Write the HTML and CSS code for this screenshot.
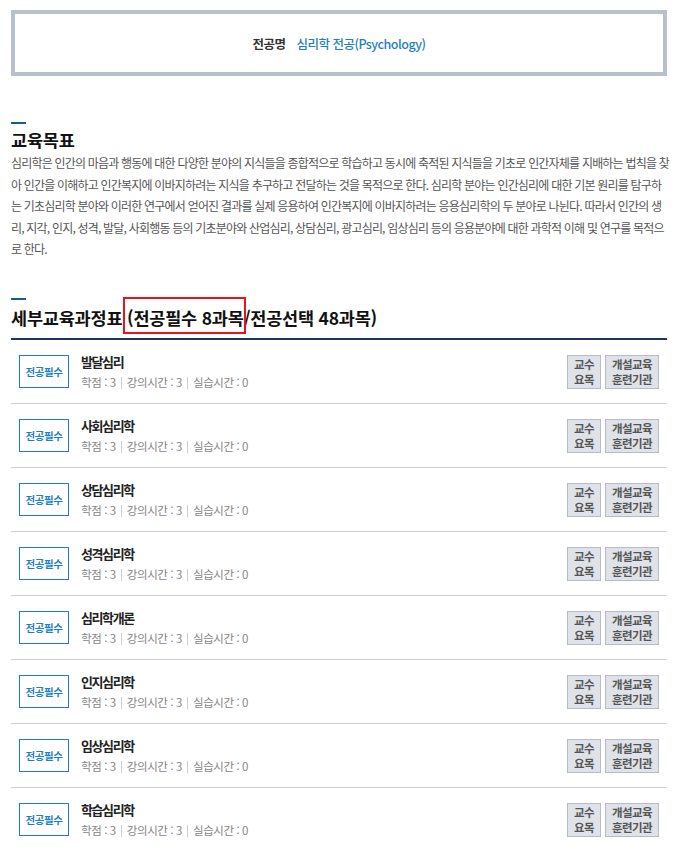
FILE: index.html
```html
<!DOCTYPE html>
<html lang="ko">
<head>
    <meta charset="utf-8">
    <title>전공 교육과정</title>
    <link rel="stylesheet" href="styles.css">
</head>
<body>
    <div class="wrap">
        <div class="major-box">
            <span class="major-label">전공명</span>
            <span class="major-name">심리학 전공(Psychology)</span>
        </div>

        <div class="section goal">
            <h2 class="sec-title">교육목표</h2>
            <p class="goal-text">심리학은 인간의 마음과 행동에 대한 다양한 분야의 지식들을 종합적으로 학습하고 동시에 축적된 지식들을 기초로 인간자체를 지배하는 법칙을 찾<br>아 인간을 이해하고 인간복지에 이바지하려는 지식을 추구하고 전달하는 것을 목적으로 한다. 심리학 분야는 인간심리에 대한 기본 원리를 탐구하<br>는 기초심리학 분야와 이러한 연구에서 얻어진 결과를 실제 응용하여 인간복지에 이바지하려는 응용심리학의 두 분야로 나뉜다. 따라서 인간의 생<br>리, 지각, 인지, 성격, 발달, 사회행동 등의 기초분야와 산업심리, 상담심리, 광고심리, 임상심리 등의 응용분야에 대한 과학적 이해 및 연구를 목적으<br>로 한다.</p>
        </div>

        <div class="section course">
            <h2 class="sec-title">세부교육과정표 <span class="mark">(전공필수 8과목</span>/전공선택 48과목)</h2>
            <ul class="course-list">
                <li class="course-item">
                    <span class="badge">전공필수</span>
                    <div class="course-info">
                        <p class="course-name">발달심리</p>
                        <p class="course-meta">학점 : 3<span class="sep"></span>강의시간 : 3<span class="sep"></span>실습시간 : 0</p>
                    </div>
                    <div class="course-btns">
                        <button class="btn">교수<br>요목</button>
                        <button class="btn">개설교육<br>훈련기관</button>
                    </div>
                </li>
                <li class="course-item">
                    <span class="badge">전공필수</span>
                    <div class="course-info">
                        <p class="course-name">사회심리학</p>
                        <p class="course-meta">학점 : 3<span class="sep"></span>강의시간 : 3<span class="sep"></span>실습시간 : 0</p>
                    </div>
                    <div class="course-btns">
                        <button class="btn">교수<br>요목</button>
                        <button class="btn">개설교육<br>훈련기관</button>
                    </div>
                </li>
                <li class="course-item">
                    <span class="badge">전공필수</span>
                    <div class="course-info">
                        <p class="course-name">상담심리학</p>
                        <p class="course-meta">학점 : 3<span class="sep"></span>강의시간 : 3<span class="sep"></span>실습시간 : 0</p>
                    </div>
                    <div class="course-btns">
                        <button class="btn">교수<br>요목</button>
                        <button class="btn">개설교육<br>훈련기관</button>
                    </div>
                </li>
                <li class="course-item">
                    <span class="badge">전공필수</span>
                    <div class="course-info">
                        <p class="course-name">성격심리학</p>
                        <p class="course-meta">학점 : 3<span class="sep"></span>강의시간 : 3<span class="sep"></span>실습시간 : 0</p>
                    </div>
                    <div class="course-btns">
                        <button class="btn">교수<br>요목</button>
                        <button class="btn">개설교육<br>훈련기관</button>
                    </div>
                </li>
                <li class="course-item">
                    <span class="badge">전공필수</span>
                    <div class="course-info">
                        <p class="course-name">심리학개론</p>
                        <p class="course-meta">학점 : 3<span class="sep"></span>강의시간 : 3<span class="sep"></span>실습시간 : 0</p>
                    </div>
                    <div class="course-btns">
                        <button class="btn">교수<br>요목</button>
                        <button class="btn">개설교육<br>훈련기관</button>
                    </div>
                </li>
                <li class="course-item">
                    <span class="badge">전공필수</span>
                    <div class="course-info">
                        <p class="course-name">인지심리학</p>
                        <p class="course-meta">학점 : 3<span class="sep"></span>강의시간 : 3<span class="sep"></span>실습시간 : 0</p>
                    </div>
                    <div class="course-btns">
                        <button class="btn">교수<br>요목</button>
                        <button class="btn">개설교육<br>훈련기관</button>
                    </div>
                </li>
                <li class="course-item">
                    <span class="badge">전공필수</span>
                    <div class="course-info">
                        <p class="course-name">임상심리학</p>
                        <p class="course-meta">학점 : 3<span class="sep"></span>강의시간 : 3<span class="sep"></span>실습시간 : 0</p>
                    </div>
                    <div class="course-btns">
                        <button class="btn">교수<br>요목</button>
                        <button class="btn">개설교육<br>훈련기관</button>
                    </div>
                </li>
                <li class="course-item">
                    <span class="badge">전공필수</span>
                    <div class="course-info">
                        <p class="course-name">학습심리학</p>
                        <p class="course-meta">학점 : 3<span class="sep"></span>강의시간 : 3<span class="sep"></span>실습시간 : 0</p>
                    </div>
                    <div class="course-btns">
                        <button class="btn">교수<br>요목</button>
                        <button class="btn">개설교육<br>훈련기관</button>
                    </div>
                </li>
            </ul>
        </div>
    </div>
</body>
</html>
```

FILE: styles.css
```css
body {
    margin: 0;
    font-family: "Noto Sans CJK KR", "Noto Sans", sans-serif;
    color: #333;
    background: #fff;
}

.wrap {
    padding: 10px 13px 0 11px;
}

/* 전공명 박스 */
.major-box {
    height: 58px;
    border: 4px solid #b8c0cc;
    display: flex;
    align-items: center;
    justify-content: center;
    font-size: 12.5px;
    letter-spacing: -0.5px;
}

.major-label {
    font-weight: bold;
    color: #333;
    margin-right: 11px;
}

.major-name {
    font-weight: 500;
    color: #1f7fc3;
}

.section.goal {
    margin-top: 46px;
}

.section.course {
    margin-top: 38px;
}

.sec-title {
    margin: 0;
    font-size: 17.5px;
    line-height: 24px;
    font-weight: bold;
    color: #111;
    letter-spacing: -0.2px;
}

.sec-title::before {
    content: "";
    display: block;
    width: 15px;
    height: 2px;
    background: #1b5f89;
    margin-bottom: 4px;
}

.goal-text {
    margin: 0;
    font-size: 12px;
    line-height: 21.5px;
    color: #555;
    letter-spacing: -0.8px;
    white-space: nowrap;
}

.course .sec-title::before {
    margin-bottom: 6px;
}

.mark {
    position: relative;
}

.mark::after {
    content: "";
    position: absolute;
    left: -4px;
    right: -2px;
    top: -8px;
    bottom: -4px;
    border: 2px solid #e8141a;
}

/* 교육과정 목록 */
.course-list {
    list-style: none;
    margin: 8px 0 0;
    padding: 0;
    border-top: 2px solid #1c3660;
}

.course-item {
    display: flex;
    align-items: center;
    padding: 12px 8px 11px;
    border-bottom: 1px solid #cfcfcf;
}

.badge {
    width: 48px;
    height: 31px;
    border: 1px solid #1f7fc3;
    display: flex;
    align-items: center;
    justify-content: center;
    font-size: 10.5px;
    font-weight: bold;
    color: #1f7fc3;
    letter-spacing: -0.4px;
    flex-shrink: 0;
}

.course-info {
    flex: 1;
    margin-left: 12px;
}

.course-info p {
    margin: 0;
    line-height: 20px;
}

.course-name {
    font-size: 13px;
    font-weight: bold;
    color: #222;
    letter-spacing: -1.4px;
}

.course-meta {
    font-size: 11.5px;
    color: #858585;
    letter-spacing: -0.4px;
}

.sep {
    display: inline-block;
    width: 0;
    height: 12px;
    border-left: 1px solid #cfcfcf;
    margin: 0 5px;
    vertical-align: -2px;
}

.course-btns {
    display: flex;
    gap: 4px;
}

.btn {
    height: 34px;
    padding: 0 6px;
    border: 1px solid #b7bcc5;
    background: #dfe2e8;
    font-family: inherit;
    font-size: 11.5px;
    font-weight: bold;
    line-height: 15px;
    color: #555;
    letter-spacing: -0.6px;
}
```
